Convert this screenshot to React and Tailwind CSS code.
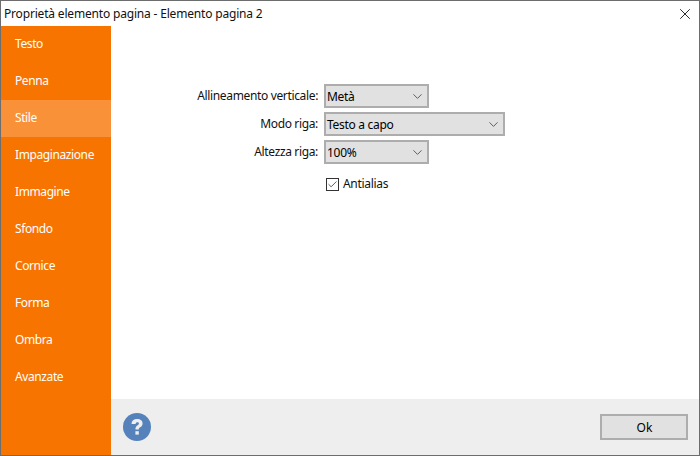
import { ChevronDown, X, Check } from 'lucide-react';

const voci = ['Testo', 'Penna', 'Stile', 'Impaginazione', 'Immagine', 'Sfondo', 'Cornice', 'Forma', 'Ombra', 'Avanzate'];

function Tendina({ valore, larga }) {
  return (
    <div className={`flex h-6 items-center justify-between border-2 border-[#adadad] bg-[#e1e1e1] pl-[1px] pr-[2px] tracking-[-0.3px] text-black ${larga ? 'w-[181px]' : 'w-[105px]'}`}>
      <span className="pt-[1px]">{valore}</span>
      <ChevronDown size={15} strokeWidth={1.1} className="text-[#222]" />
    </div>
  );
}

function Etichetta({ children }) {
  return <div className="flex items-center justify-end whitespace-nowrap pr-[6px] tracking-[-0.35px]">{children}</div>;
}

export default function App() {
  return (
    <div className="flex h-[456px] w-[700px] flex-col overflow-hidden border border-[#6d6d6d] bg-white font-['Noto_Sans','Open_Sans',sans-serif] text-[12px] text-[#111]">
      <div className="flex h-[25px] shrink-0 items-center justify-between pl-[3px] pr-[4px]">
        <span className="tracking-[-0.18px]">Proprietà elemento pagina - Elemento pagina 2</span>
        <X size={18} strokeWidth={1.1} className="mr-[1px] text-black" />
      </div>
      <div className="flex min-h-0 flex-1">
        <div className="w-[110px] shrink-0 bg-[#f77400] tracking-[-0.4px] text-white">
          {voci.map(v => (
            <div key={v} className={`flex h-[37px] items-center pb-[1px] pl-[14px] ${v === 'Stile' ? 'bg-[#f89137]' : ''}`}>{v}</div>
          ))}
        </div>
        <div className="flex min-w-0 flex-1 flex-col">
          <div className="flex-1 pt-[58px] pl-[87px]">
            <div className="grid grid-cols-[126px_auto] justify-start gap-y-1">
              <Etichetta>Allineamento verticale:</Etichetta>
              <Tendina valore="Metà" />
              <Etichetta>Modo riga:</Etichetta>
              <Tendina valore="Testo a capo" larga />
              <Etichetta>Altezza riga:</Etichetta>
              <Tendina valore="100%" />
              <div className="col-start-2 mt-[7px] flex items-center pl-[2px]">
                <span className="flex h-[13px] w-[13px] items-center justify-center border border-[#333] bg-white">
                  <Check size={11} strokeWidth={1.5} className="text-[#111]" />
                </span>
                <span className="ml-[4px] pb-[1px] tracking-[-0.3px]">Antialias</span>
              </div>
            </div>
          </div>
          <div className="flex h-[56px] shrink-0 items-start justify-between bg-[#eeeeee] pl-3 pr-[11px]">
            <svg width="28" height="28" viewBox="0 0 28 28" className="mt-[14px]">
              <circle cx="14" cy="14" r="14" fill="#5582bb" />
              <path d="M8.6 11c0-3.2 2.3-5 5.6-5 3.2 0 5.4 1.7 5.4 4.4 0 1.9-1 2.9-2.5 3.9-1 .7-1.3 1.2-1.3 2.3h-3.4c0-2.1.5-3.1 1.9-4.1 1.1-.8 1.6-1.2 1.6-2 0-.8-.6-1.3-1.5-1.3-1 0-1.7.6-1.8 1.8z" fill="#eeeeee" />
              <rect x="12.4" y="18.2" width="3.4" height="3.4" fill="#eeeeee" />
            </svg>
            <div className="mt-[15px] flex h-[26px] w-[88px] items-center justify-center border-2 border-[#adadad] bg-[#e1e1e1] pl-[1px] pt-[1px] text-black">Ok</div>
          </div>
        </div>
      </div>
    </div>
  );
}
